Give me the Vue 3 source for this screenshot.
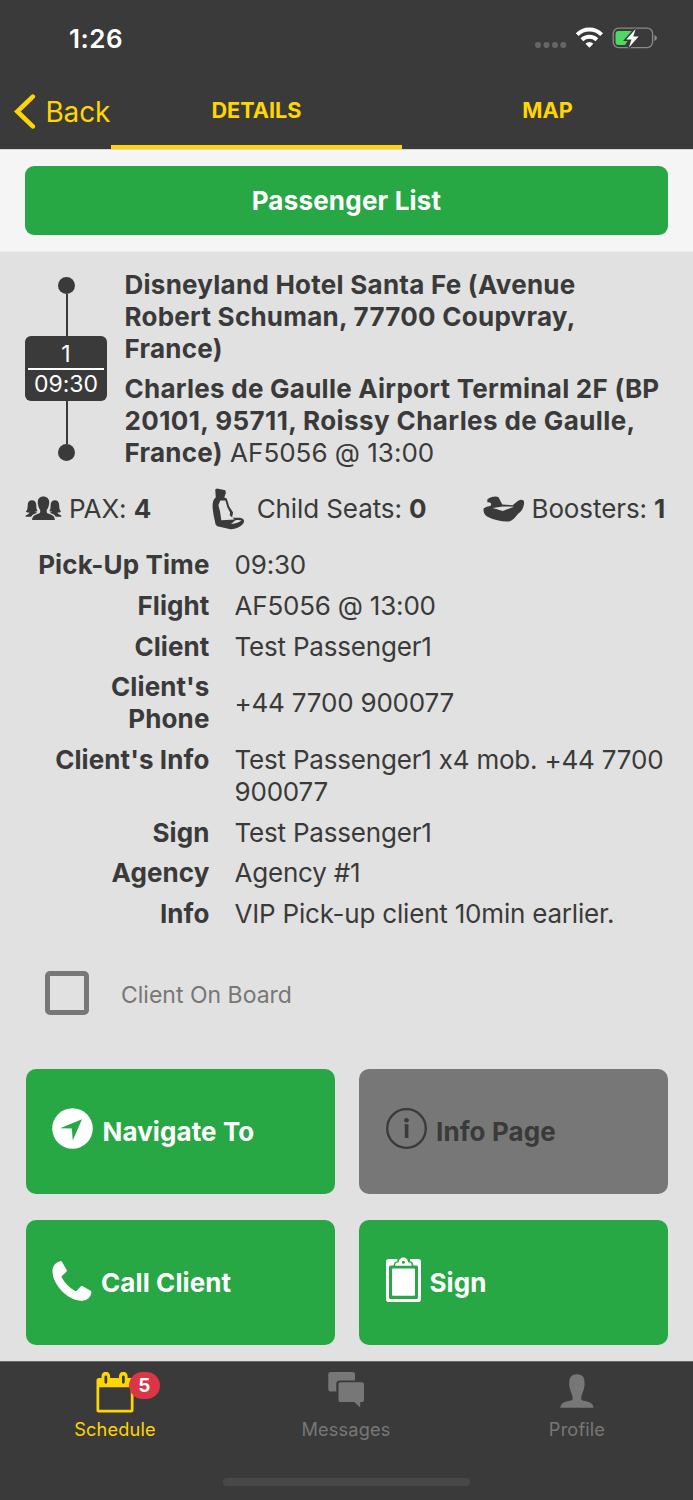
<script setup>
const details = [
  { label: 'Pick-Up Time', value: '09:30' },
  { label: 'Flight', value: 'AF5056 @ 13:00' },
  { label: 'Client', value: 'Test Passenger1' },
  { label: "Client's Phone", value: '+44 7700 900077' },
  { label: "Client's Info", value: 'Test Passenger1 x4 mob. +44 7700 900077' },
  { label: 'Sign', value: 'Test Passenger1' },
  { label: 'Agency', value: 'Agency #1' },
  { label: 'Info', value: 'VIP Pick-up client 10min earlier.' },
]
</script>

<template>
  <div class="screen">
    <header class="header">
      <div class="status">
        <span class="clock">1:26</span>
        <svg class="status-icons" width="124" height="24" viewBox="0 0 124 24">
          <g fill="#656565">
            <rect x="2" y="15" width="6" height="6" rx="2.4" />
            <rect x="10.5" y="15" width="6" height="6" rx="2.4" />
            <rect x="19" y="15" width="6" height="6" rx="2.4" />
            <rect x="27.3" y="15" width="6" height="6" rx="2.4" />
          </g>
          <g fill="none" stroke="#fff" stroke-width="4">
            <path d="M44.2 7.600a17.300 17.300 0 0 1 24.400 0" />
            <path d="M48.900 12.800a10.700 10.700 0 0 1 15 0" />
          </g>
          <path fill="#fff" d="M56.400 20.700l-3.900-4a5.600 5.600 0 0 1 7.800 0z" />
          <rect x="80.200" y="1.200" width="39.400" height="19.400" rx="5.500" fill="none" stroke="#8b8b8b" stroke-width="1.300" />
          <path fill="#8b8b8b" d="M121.400 8q2.600 1 2.600 3t-2.600 3z" />
          <path d="M85.500 3.900h15.500l-9 14.200h-6.500a3 3 0 0 1-3-3v-8.200a3 3 0 0 1 3-3z" fill="#4cd964" />
          <path d="M102.600 2 93.300 12.600h5.200l-2.600 8 9.700-11.100h-5.300z" fill="#fff" stroke="#3a3a3a" stroke-width="3" paint-order="stroke" />
        </svg>
      </div>
      <nav class="topnav">
        <div class="back">
          <svg width="22" height="35" viewBox="0 0 22 35"><path d="M18.800 2.600 3.300 17.500 18.800 32.400" fill="none" stroke="#ffd600" stroke-width="4.600" stroke-linecap="round" /></svg>
          <span>Back</span>
        </div>
        <div class="tab active"><span>DETAILS</span></div>
        <div class="tab"><span>MAP</span></div>
      </nav>
    </header>

    <div class="band"><button class="passenger"><span>Passenger List</span></button></div>

    <main class="main">
      <section class="route">
        <div class="timeline">
          <i class="dot"></i><i class="line"></i>
          <div class="timebox"><span class="one">1</span><span class="time">09:30</span></div>
          <i class="line low"></i><i class="dot"></i>
        </div>
        <div class="places">
          <p><b>Disneyland Hotel Santa Fe (Avenue<br>Robert Schuman, 77700 Coupvray,<br>France)</b></p>
          <p><b>Charles de Gaulle Airport Terminal 2F (BP<br><span class="wide">20101, 95711, Roissy Charles de Gaulle,</span><br>France)</b> AF5056 @ 13:00</p>
        </div>
      </section>

      <section class="counts">
        <div class="count">
          <svg class="pax" width="37" height="25" viewBox="0 0 37 25" fill="#3a3a3a">
            <path d="M18.300 .5c-3.700 0-5.600 2.500-5.500 5.700 0 1.200-.1 1.700.3 2.300.2 2.400.9 3.900 2 5.200.3 1.800.2 3-.8 3.500-3.200 1.400-6.800 1.700-7.200 6.800h22.800c-.4-5.100-4-5.400-7.300-6.800-1-.5-1-1.700-.8-3.500 1.200-1.300 1.900-2.800 2.100-5.200.4-.6.300-1.100.3-2.300C24.300 3 22.100.5 18.300.5z" />
            <path d="M7 4.300c-2.700 0-4.200 1.700-4.300 4.900-.1 2.900-.5 5.400-1.800 6.200.7.900 2 1.100 3.400 1.200-.1 1.200-.7 1.500-1.700 1.900C1 19.100.6 19.500.5 20.700h5.700c1-2.200 3.500-3 6-3.900-.6-.5-1.700-.3-2.200-1.200 1.300 0 2-.3 2.500-.7-1.500-2.400-1-4-1.200-5.900C11.100 5.900 9.700 4.300 7 4.300z" />
            <path d="M29.900 4.300c2.700 0 4.200 1.700 4.300 4.900.1 2.900.5 5.400 1.800 6.200-.7.900-2 1.100-3.400 1.200.1 1.200.7 1.500 1.700 1.900 1.600.6 2 1 2.100 2.200h-5.700c-1-2.200-3.500-3-6-3.900.6-.5 1.700-.3 2.200-1.200-1.300 0-2-.3-2.500-.7 1.500-2.400 1-4 1.200-5.900.2-3.100 1.600-4.700 4.300-4.700z" />
          </svg>
          <span>PAX: <b>4</b></span>
        </div>
        <div class="count seats">
          <svg width="33" height="42" viewBox="0 0 33 42" fill="#3a3a3a">
            <path fill-rule="evenodd" d="M3.200 1.600 5 .6l8.300 1.700.6 2.500-1.600 4.700 2.500 1 2.400 8 3.900 6-1.100 5.300 7.800-.1c3.300.5 4.600 2 4.200 4.200-1.200 3.700-6.500 6.700-13.500 7.300L5.300 38.300 3.600 36.500C2.300 30 .5 23.500.6 17.500c.1-3.500.8-6 3.200-8.200zM8.300 12.500l-1.900 4.700 1.700 6.600 1.200 8.500 9.200-.6 4-.3-3.300-3-1.500-1.200.4-2.800-2.800-5.200-1.900-6.700zM18.500 35.800c4 .5 8.600-1.300 11-3.200-2.300-.9-6.100-.6-7.700.8-.9 1.200-1.900 1.800-3.300 2.400z" />
          </svg>
          <span>Child Seats: <b>0</b></span>
        </div>
        <div class="count boosters">
          <svg width="42" height="26" viewBox="0 0 42 26" fill="#3a3a3a">
            <path fill-rule="evenodd" d="M4.300 3.500C7 .7 13.300-.3 15.500 1.200l3.800 7.200 10.300.9 5.200-4.400c3.800-2 7-1.300 6.200 3-.6 4.500-2.900 7.800-5.600 9.600-3.300 3.200-5.300 8.300-11.500 8-6.200-.2-12.900-1.700-18.900-4.600C.8 18.800.2 15.300.6 12.600c1.900-2.100 4.700-2 6.900-2.900 1.300-1.600.7-3.800-3.200-3.500zM9.700 11.900l10 3.100 11.500-4.300-11.300-.3z" />
          </svg>
          <span>Boosters: <b>1</b></span>
        </div>
      </section>

      <dl class="details">
        <div v-for="row in details" :key="row.label" class="row" :class="{ mid: row.label.includes('Phone') }">
          <dt>{{ row.label }}</dt><dd>{{ row.value }}</dd>
        </div>
      </dl>

      <label class="board"><i class="box"></i><span>Client On Board</span></label>

      <section class="actions">
        <button class="action">
          <svg width="41" height="41" viewBox="0 0 41 41"><circle cx="20.500" cy="20.500" r="20.300" fill="#fff" /><path d="M30 11.200 8.100 20.200l11.800.3.800 12z" fill="#28a745" /></svg>
          <span>Navigate To</span>
        </button>
        <button class="action off">
          <svg width="41" height="41" viewBox="0 0 41 41"><circle cx="20.500" cy="20.500" r="19.300" fill="none" stroke="#3a3a3a" stroke-width="2.300" /><circle cx="20.500" cy="12.300" r="2.300" fill="#3a3a3a" /><path d="M18.400 16.200h4v13.800h-3.600V17.600h-.4z" fill="#3a3a3a" /></svg>
          <span>Info Page</span>
        </button>
        <button class="action call">
          <svg width="40" height="40" viewBox="0 0 40 40" fill="#fff"><path d="M7.500.5c1.800-.5 2.200-.1 2.900 1.100l4.200 7.200c.5.900.4 1.500-.4 2.200l-4.100 3.800c-.8.800-.7 1.400-.1 2.300 3.400 5.600 7.300 9.700 12.700 12.600 1 .5 1.500.5 2.300-.3l3.600-3.800c.7-.7 1.300-.9 2.200-.4l7.300 4.200c1 .6 1.500 1.100 1.200 2.700-.7 4.400-4.200 7.400-9 7.600C16.500 40.200.8 24.200.5 10.500.4 5.200 3.300 1.600 7.500.5z" /></svg>
          <span>Call Client</span>
        </button>
        <button class="action sign">
          <svg width="35" height="45" viewBox="0 0 35 45">
            <path d="M2.800 2h8.600v2L8.500 5.500 7.500 8.500H4.500A1.500 1.500 0 0 0 3 10v30.500A1.500 1.500 0 0 0 4.500 42h26a1.500 1.500 0 0 0 1.500-1.500V10a1.500 1.500 0 0 0-1.500-1.500h-3l-1-3L24 4V2h8.200A2.800 2.800 0 0 1 35 4.800v37.400a2.800 2.800 0 0 1-2.800 2.800H2.800A2.800 2.800 0 0 1 0 42.200V4.800A2.800 2.800 0 0 1 2.800 2z" fill="#fff" />
            <rect x="6" y="11.500" width="23" height="27.300" rx="1" fill="#fff" />
            <path fill-rule="evenodd" d="M9.200 8.800c0-2.700 1-3.500 3.500-3.500 0-2.600 2.300-4.700 4.700-4.700s4.700 2.100 4.700 4.700c2.600 0 3.600.8 3.600 3.500zM17.400 3.700a1.500 1.500 0 1 0 0 3 1.500 1.500 0 0 0 0-3z" fill="#fff" />
          </svg>
          <span>Sign</span>
        </button>
      </section>
    </main>

    <footer class="tabbar">
      <div class="item on">
        <div class="glyph">
          <svg width="38" height="41" viewBox="0 0 38 41"><path fill="#ffd600" fill-rule="evenodd" d="M2.500 6H5.500V4a4.300 4.300 0 0 1 8.600 0v2H23V4a4.300 4.300 0 0 1 8.600 0v2H35a2.500 2.500 0 0 1 2.500 2.500v30a2 2 0 0 1-2 2h-33a2 2 0 0 1-2-2V8.200A2.200 2.200 0 0 1 2.500 6zM3.200 15.200v22.500h31.600V15.200zM8.500 4.800v5.500a1.300 1.300 0 0 0 2.700 0V4.800a1.300 1.300 0 0 0-2.700 0zm17.500 0v5.500a1.300 1.300 0 0 0 2.700 0V4.800a1.300 1.300 0 0 0-2.700 0z" /></svg>
          <span class="badge">5</span>
        </div>
        <span>Schedule</span>
      </div>
      <div class="item">
        <div class="glyph">
          <svg width="36" height="36" viewBox="0 0 36 36" fill="#777"><path d="M2.500 0h21.700C26 0 27 .8 27 2.300v6.100H12c-2.500 0-3.700 1.200-3.700 3.600v7.400H2.500C1 19.400.3 18.500.3 17V2.300C.3.800 1 0 2.500 0z" /><path d="M12.500 10.300h21c1.500 0 2.500.8 2.500 2.300v15.200c0 1.500-1 2.300-2.300 2.300h-1.500v5.500l-6-5.500H12.500c-1.300 0-2-.8-2-2.300V12.600c0-1.500.7-2.300 2-2.300z" /></svg>
        </div>
        <span>Messages</span>
      </div>
      <div class="item">
        <div class="glyph">
          <svg class="person" width="34" height="34" viewBox="0 0 34 34" fill="#777"><path d="M17 .3c-5 0-7.700 2.900-7.700 7.500 0 1.800-.3 2.300.1 4.400.5 2.300.9 4.300 2.400 7.700.9 2.300.8 3.800.8 5.400 0 1-2.100 1.500-4.600 2-4 .8-7.300 2.100-7.700 6.400h33.200c-.4-4.300-3.700-5.600-7.700-6.400-2.500-.5-4.500-1-4.500-2 0-1.600-.1-3.100.8-5.400 1.400-3.400 1.900-5.400 2.300-7.700.4-2.100.1-2.600.1-4.400C24.500 3.200 22 .3 17 .3z" /></svg>
        </div>
        <span>Profile</span>
      </div>
      <i class="home"></i>
    </footer>
  </div>
</template>

<style>
body { margin: 0; background: #3a3a3a; }
</style>

<style scoped>
* { box-sizing: border-box; }
.screen { width: 693px; height: 1500px; display: flex; flex-direction: column; overflow: hidden; background: #e1e1e1; color: #3a3a3a; font-family: Inter, "Liberation Sans", sans-serif; font-size: 26px; white-space: nowrap; font-feature-settings: "calt" 0; }
button { border: 0; font: inherit; padding: 0; margin: 0; }
svg { display: block; flex: none; }
i { display: block; flex: none; }
.header { height: 149px; background: #3a3a3a; flex: none; }
.status { height: 76px; display: flex; justify-content: space-between; padding: 27px 36px 0 69px; }
.clock { color: #fff; font-weight: 600; font-size: 26px; line-height: 24px; letter-spacing: .5px; }
.topnav { display: grid; grid-template-columns: 111px 291px 291px; height: 73px; color: #ffd600; }
.back { display: flex; padding: 17.500px 0 0 13.500px; font-size: 28px; line-height: 38px; gap: 10px; letter-spacing: -.2px; }
.back span { margin-top: -.5px; }
.tab { text-align: center; font-weight: 700; font-size: 21.700px; line-height: 69px; height: 73px; border-bottom: 4px solid transparent; }
.tab.active { border-color: #ffd600; }
.band { height: 103px; flex: none; background: #f5f5f5; padding: 16px 25px 0; border-bottom: 1px solid #ececec; border-top: 1px solid #d8d8d8; }
.passenger { width: 643px; height: 69px; border-radius: 9px; background: #28a745; color: #fff; font-weight: 700; letter-spacing: .2px; }
.main { padding: 0 25px; height: 1109px; flex: none; }
.route { display: flex; padding-top: 17px; height: 228px; }
.timeline { width: 82px; margin-right: 17.500px; display: flex; flex-direction: column; align-items: center; padding-top: 8px; }
.dot { width: 17px; height: 17px; border-radius: 50%; background: #3a3a3a; }
.line { width: 2px; height: 42px; background: #3a3a3a; margin-left: 2px; }
.line.low { height: 42.500px; }
.timebox { width: 82px; height: 65px; border-radius: 6px; background: #3a3a3a; color: #fff; padding: 3px 3px 0; text-align: center; font-size: 23px; display: flex; flex-direction: column; }
.one { line-height: 30px; border-bottom: 2px solid #fff; height: 31px; }
.time { line-height: 29px; }
.places p { margin: 0 0 8px; line-height: 32px; }
.places b { letter-spacing: .25px; }
.places .wide { letter-spacing: .4px; }
b { font-weight: 700; }
.counts { height: 57px; display: flex; align-items: center; }
.count { display: flex; align-items: center; gap: 7px; letter-spacing: -.1px; }
.seats { margin-left: 61px; gap: 11.500px; }
.boosters { margin-left: 57px; gap: 6px; }
.details { margin: 7.500px 0 0; line-height: 31.800px; }
.row { display: flex; padding: 4.500px 0; }
.row.mid { align-items: center; }
dt { flex: none; width: 184.500px; text-align: right; font-weight: 700; white-space: normal; letter-spacing: .1px; }
.row.mid dt { padding-left: 70px; }
dd { flex: none; margin: 0 0 0 25px; width: 445px; white-space: normal; letter-spacing: -.2px; }
.board { display: flex; align-items: center; margin-top: 36.500px; height: 44px; padding-left: 20px; color: #777; font-size: 23px; gap: 32px; }
.board span { padding-top: 5px; }
.box { width: 44px; height: 44px; border: 5px solid #777; border-radius: 5px; }
.actions { display: grid; grid-template-columns: 308.500px 308.500px; gap: 25.500px 24.500px; margin-top: 54.500px; padding-left: 1px; }
.action { height: 125px; border-radius: 10px; background: #28a745; color: #fff; font-weight: 700; display: flex; align-items: center; padding: 0 0 6px 26px; gap: 9.500px; letter-spacing: .1px; }
.action span { padding-top: 6px; }
.action.call { gap: 9px; }
.action.call svg { margin-top: 3px; }
.action.sign { gap: 9px; }
.action.off { background: #777; color: #3a3a3a; padding-left: 26.500px; }
.action.sign { padding-left: 26.500px; }
.tabbar { height: 139px; flex: none; background: #3a3a3a; border-top: 1px solid #666; display: grid; grid-template-columns: repeat(3, 231px); position: relative; color: #777; font-size: 18.200px; letter-spacing: .15px; }
.item { display: flex; flex-direction: column; align-items: center; padding-right: 1px; }
.item.on { color: #ffd600; }
.glyph { position: relative; height: 54px; padding-top: 10px; }
.item span { line-height: 26px; }
.person { margin-top: 1.500px; }
.glyph .badge { position: absolute; left: 33px; top: 10px; width: 31px; height: 27px; border-radius: 14px; background: #dc3545; color: #fff; font-weight: 700; font-size: 19px; line-height: 27px; text-align: center; }
.home { position: absolute; left: 223px; bottom: 14px; width: 247px; height: 8px; border-radius: 4px; background: #484848; }
</style>
